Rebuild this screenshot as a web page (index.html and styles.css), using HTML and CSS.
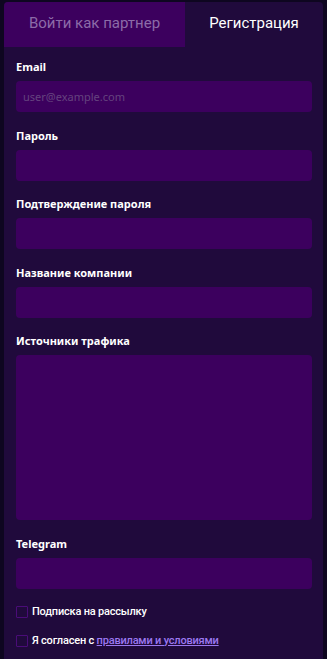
FILE: index.html
```html
<!DOCTYPE html>
<html lang="ru">
<head>
<meta charset="utf-8">
<title>Регистрация</title>
<link rel="stylesheet" href="styles.css">
</head>
<body>
<div class="card">
  <div class="tabs">
    <div class="tab tab-inactive">Войти как партнер</div>
    <div class="tab tab-active">Регистрация</div>
  </div>
  <form class="form">
    <div class="field">
      <label class="label">Email</label>
      <input class="input" type="text" placeholder="user@example.com">
    </div>
    <div class="field">
      <label class="label">Пароль</label>
      <input class="input" type="password">
    </div>
    <div class="field">
      <label class="label">Подтверждение пароля</label>
      <input class="input" type="password">
    </div>
    <div class="field">
      <label class="label">Название компании</label>
      <input class="input" type="text">
    </div>
    <div class="field">
      <label class="label">Источники трафика</label>
      <textarea class="input textarea"></textarea>
    </div>
    <div class="field field-last">
      <label class="label">Telegram</label>
      <input class="input" type="text">
    </div>
    <label class="check">
      <input class="box" type="checkbox">
      <span>Подписка на рассылку</span>
    </label>
    <label class="check">
      <input class="box" type="checkbox">
      <span>Я согласен с <a class="link" href="#">правилами и условиями</a></span>
    </label>
  </form>
</div>
</body>
</html>
```

FILE: styles.css
```css
html, body {
  margin: 0;
  padding: 0;
  background: #0e0620;
  height: 100%;
}
body {
  font-family: "Noto Sans", "Open Sans", sans-serif;
  color: #ffffff;
}
.card {
  margin: 2px 4px 0 4px;
  background: #200a3c;
  border-radius: 4px 4px 0 0;
  min-height: calc(100% - 2px);
  overflow: hidden;
}
.tabs {
  display: grid;
  grid-template-columns: 181px 1fr;
  height: 45px;
}
.tab {
  display: flex;
  align-items: center;
  justify-content: center;
  font-family: Roboto, "Noto Sans", sans-serif;
  font-size: 15px;
  padding-bottom: 4px;
  box-sizing: border-box;
  white-space: nowrap;
}
.tab-inactive {
  background: #3c005e;
  color: #8c6ba8;
}
.tab-active {
  color: #ffffff;
}
.form {
  display: flex;
  flex-direction: column;
  padding: 13px 11px 0 12px;
}
.field {
  display: flex;
  flex-direction: column;
  margin-bottom: 16.5px;
}
.field-last {
  margin-bottom: 16px;
}
.label {
  font-size: 11px;
  line-height: 14px;
  font-weight: 700;
  margin-bottom: 7px;
}
.input {
  appearance: none;
  -webkit-appearance: none;
  border: none;
  outline: none;
  background: #3c005e;
  border-radius: 4px;
  height: 31px;
  width: 100%;
  box-sizing: border-box;
  padding: 0 7px;
  font-family: inherit;
  font-size: 11px;
  color: #ffffff;
}
.input::placeholder {
  color: #65437f;
}
.textarea {
  height: 165px;
  resize: none;
}
.check {
  display: flex;
  align-items: center;
  gap: 4px;
  font-family: Roboto, "Noto Sans", sans-serif;
  font-size: 11px;
  letter-spacing: -0.2px;
  font-weight: 500;
  line-height: 14px;
  margin-bottom: 15px;
}
.box {
  appearance: none;
  -webkit-appearance: none;
  margin: 0;
  width: 12px;
  height: 12px;
  border: 1px solid #4a0c78;
  border-radius: 1px;
  background: transparent;
  box-sizing: border-box;
  flex: none;
}
.link {
  color: #9b78f0;
  text-decoration: underline;
}
```
